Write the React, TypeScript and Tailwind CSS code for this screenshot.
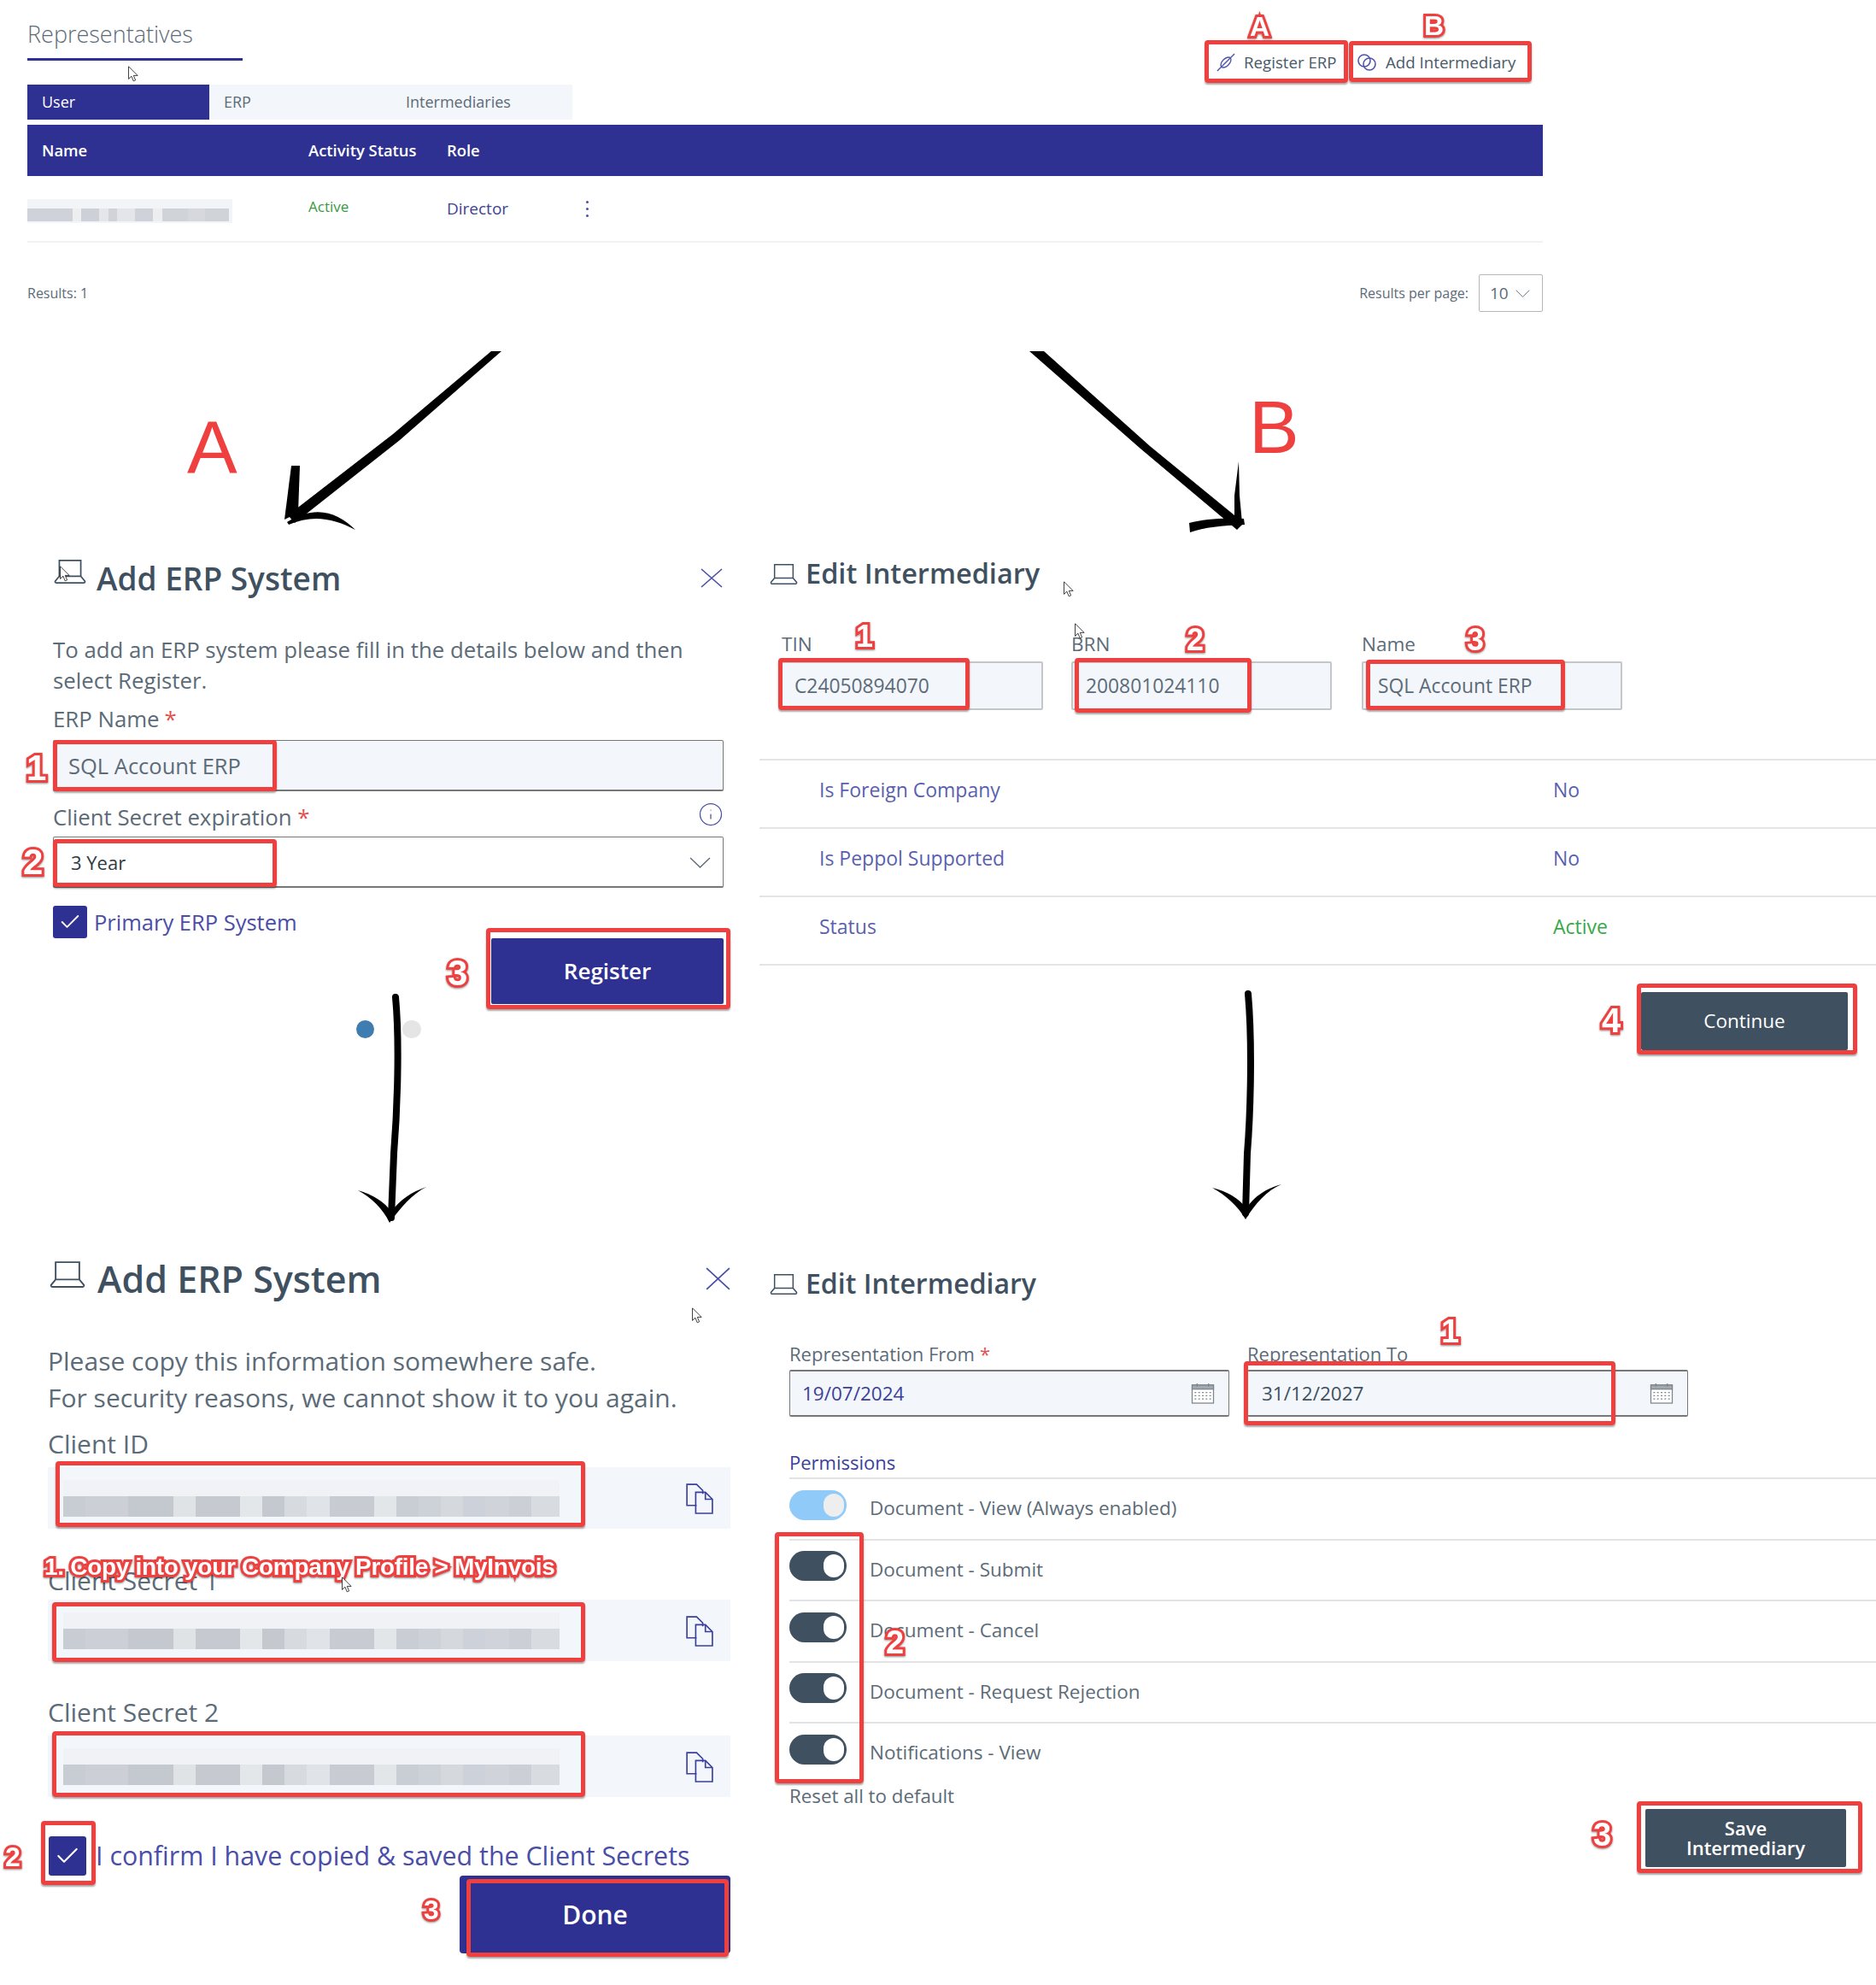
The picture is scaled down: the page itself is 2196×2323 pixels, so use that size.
import React from "react";
import { Check, Info } from "lucide-react";

const navy = "bg-[#2e3192]";

const blurCells = [
  "w-[26px] bg-[#c8ccd3]",
  "w-[50px] bg-[#ccd0d6]",
  "w-[53px] bg-[#c4c9d0]",
  "w-[26px] bg-[#dfe3e6]",
  "w-[52px] bg-[#c6cad0]",
  "w-[26px] bg-[#e3e7ea]",
  "w-[26px] bg-[#c3c9cf]",
  "w-[26px] bg-[#d7dbe0]",
  "w-[27px] bg-[#e0e4e8]",
  "w-[52px] bg-[#c8ccd2]",
  "w-[26px] bg-[#e2e6e9]",
  "w-[26px] bg-[#c9ced5]",
  "w-[26px] bg-[#cdd1d8]",
  "w-[26px] bg-[#d5d9de]",
  "w-[26px] bg-[#cdd1d9]",
  "w-[28px] bg-[#d0d4da]",
  "w-[26px] bg-[#ccd0d6]",
  "w-[33px] bg-[#d8dce0]",
];

const nameCells = [
  "w-[53px] bg-[#cfd2d8]",
  "w-[10px] bg-[#eceef0]",
  "w-[21px] bg-[#cdd0d6]",
  "w-[11px] bg-[#e4e6e9]",
  "w-[10px] bg-[#d0d3d8]",
  "w-[21px] bg-[#e3e5e8]",
  "w-[21px] bg-[#cfd2d8]",
  "w-[11px] bg-[#eceef0]",
  "w-[30px] bg-[#d0d3d8]",
  "w-[20px] bg-[#d6d8dd]",
  "w-[28px] bg-[#d0d3d8]",
];

const permissions = [
  "Document - Submit",
  "Document - Cancel",
  "Document - Request Rejection",
  "Notifications - View",
];

function LaptopIcon({ className }: { className: string }) {
  return (
    <svg viewBox="0 0 40 30" fill="none" stroke="#3f5060" strokeWidth="1.8" className={className}>
      <path d="M7 21V2h26v19" />
      <path d="M7 21h26l5 6a1.5 1.5 0 0 1-1 2H3a1.5 1.5 0 0 1-1-2z" />
    </svg>
  );
}

function CloseIcon({ className }: { className: string }) {
  return (
    <svg viewBox="0 0 26 24" fill="none" stroke="#4a4fa8" strokeWidth="1.6" preserveAspectRatio="none" className={className}>
      <path d="M1 1l24 22M25 1L1 23" />
    </svg>
  );
}

function ChevronIcon({ className }: { className: string }) {
  return (
    <svg viewBox="0 0 24 13" fill="none" stroke="#5c6b78" strokeWidth="1.3" preserveAspectRatio="none" className={className}>
      <path d="M1 1l11 11L23 1" />
    </svg>
  );
}

function CopyIcon({ className }: { className: string }) {
  return (
    <svg viewBox="0 0 32 36" fill="none" stroke="#3a3f9e" strokeWidth="1.6" className={className}>
      <path d="M13 26H2V2h11l7 7v4" />
      <path d="M12 11h11l8 8v16H12z" />
      <path d="M23 11v8h8" />
    </svg>
  );
}

function CalendarIcon() {
  return (
    <svg viewBox="0 0 28 26" className="w-[28px] h-[25px]" fill="none" stroke="#7c848c" strokeWidth="1.3">
      <rect x="1" y="3" width="26" height="22" fill="#fff" />
      <rect x="1" y="3" width="26" height="5" fill="#a2a8ae" />
      <path d="M7 1v4M21 1v4" />
      <path d="M4 12h20M4 16h20M4 20h20" strokeDasharray="2 2.5" />
    </svg>
  );
}

function Cursor({ className }: { className: string }) {
  return (
    <svg viewBox="0 0 12 19" className={`absolute w-[12px] h-[19px] ${className}`} fill="#fff" stroke="#111" strokeWidth="0.8">
      <path d="M.5.8v14.6l3.4-3.2 2.3 5.6 2.4-1-2.3-5.4h4.8z" />
    </svg>
  );
}

function RedBox({ className }: { className: string }) {
  return (
    <div
      className={`absolute border-[5px] border-[#ef4040] rounded-[4px] shadow-[0_2px_2px_rgba(0,0,0,0.35)] ${className}`}
    />
  );
}

function Mark({ className, children }: { className: string; children: React.ReactNode }) {
  return (
    <div
      className={`absolute font-['Liberation_Sans',sans-serif] font-bold leading-none text-white [-webkit-text-stroke:6px_#ef4040] [paint-order:stroke_fill] drop-shadow-[0_1px_1px_rgba(0,0,0,0.45)] ${className}`}
    >
      {children}
    </div>
  );
}

function PixelField() {
  return (
    <div className="flex items-center h-[72px] w-[799px] bg-[#f3f6fa] pl-[18px] pr-[20px] justify-between">
      <div className="w-[581px]">
        <div className="h-[19px] w-[581px] bg-[#f0f2f5]" />
        <div className="flex h-[24px]">
          {blurCells.map((cell, index) => (
            <div key={index} className={cell} />
          ))}
        </div>
      </div>
      <CopyIcon className="w-[33px] h-[37px]" />
    </div>
  );
}

function Toggle({ disabled }: { disabled?: boolean }) {
  return (
    <div
      className={`flex items-center justify-end w-[67px] h-[35px] rounded-full pr-[3px] -mt-[9px] ${
        disabled ? "bg-[#90caf9]" : "bg-[#3f5060]"
      }`}
    >
      <div className={`w-[24px] h-[27px] rounded-full ${disabled ? "bg-[#eeeeee]" : "bg-white"}`} />
    </div>
  );
}

function PermissionRow({ label, disabled }: { label: string; disabled?: boolean }) {
  return (
    <div className="flex items-center h-[71.5px] border-t-2 border-[#e2e3e4] gap-[27px]">
      <Toggle disabled={disabled} />
      <span className="text-[22.5px] text-[#5c6b78] -mt-[1px]">{label}</span>
    </div>
  );
}

function DetailRow({ label, value, green }: { label: string; value: string; green?: boolean }) {
  return (
    <div className="grid grid-cols-[859px_1fr] items-center h-[80px] border-t-2 border-[#e4e5e6] pl-[70px] pb-[9px] text-[23px] text-[#5a5fb0]">
      <span>{label}</span>
      <span className={green ? "text-[#3aa84a]" : ""}>{value}</span>
    </div>
  );
}

function ReadonlyField({
  label,
  value,
  width,
  inset,
  labelInset,
}: {
  label: string;
  value: string;
  width: string;
  inset: string;
  labelInset: string;
}) {
  return (
    <div className={width}>
      <div className={`h-[30px] mb-[5px] -mt-[2px] flex items-center text-[22.5px] text-[#5c6b78] ${labelInset}`}>{label}</div>
      <div className={`h-[57px] flex items-center pt-[2px] bg-[#f3f6fa] border-2 border-[#c4c6c9] rounded-[2px] text-[22.8px] text-[#5c6b78] ${inset}`}>
        {value}
      </div>
    </div>
  );
}

function TopSection() {
  return (
    <section className="w-[1806px] h-[412px] pl-[32px]">
      <div className="flex justify-between h-[99px]">
        <div className="w-[252px] h-[71px] pt-[20px] border-b-[3px] border-[#2e3192] text-[27px] font-light text-[#5c6b78]">
          Representatives
        </div>
        <div className="flex gap-[4px] mt-[49px] h-[48px] mr-[14px] text-[18.7px] text-[#4a5a68]">
          <div className="flex items-center gap-[10px] w-[166px] pl-[12px]">
            <svg viewBox="0 0 24 24" className="w-[22px] h-[22px]" fill="none" stroke="#4f55a8" strokeWidth="1.5">
              <path d="M1 23 23 1" />
              <ellipse cx="12" cy="12" rx="4.5" ry="8" transform="rotate(45 12 12)" />
            </svg>
            <span>Register ERP</span>
          </div>
          <div className="flex items-center gap-[10px] w-[210px] pl-[6px]">
            <svg viewBox="0 0 24 24" className="w-[24px] h-[24px]" fill="none" stroke="#4f55a8" strokeWidth="1.6">
              <circle cx="9" cy="10" r="7" />
              <circle cx="15" cy="14" r="7" />
            </svg>
            <span>Add Intermediary</span>
          </div>
        </div>
      </div>

      <div className="flex w-[638px] h-[41px] bg-[#f3f6fa] text-[18px] text-[#5c6b78]">
        <div className={`w-[213px] pl-[17px] flex items-center text-white ${navy}`}>User</div>
        <div className="w-[213px] pl-[17px] flex items-center">ERP</div>
        <div className="w-[212px] pl-[17px] flex items-center">Intermediaries</div>
      </div>

      <div className={`grid grid-cols-[312px_162px_1fr] items-center mt-[6px] h-[60px] pl-[17px] text-[18.4px] font-semibold text-white ${navy}`}>
        <span>Name</span>
        <span>Activity Status</span>
        <span>Role</span>
      </div>

      <div className="flex items-center h-[78px] border-b-2 border-[#f2f2f2]">
        <div className="w-[329px] shrink-0">
          <div className="w-[240px] h-[28px] bg-[#f3f4f7] pt-[11px] mt-[5px]">
            <div className="flex h-[15px]">
              {nameCells.map((cell, index) => (
                <div key={index} className={cell} />
              ))}
            </div>
          </div>
        </div>
        <span className="w-[162px] text-[17px] text-[#3a9a3f] -mt-[4px]">Active</span>
        <span className="w-[163px] text-[19px] text-[#3f4399]">Director</span>
        <div className="flex flex-col gap-[5px]">
          <div className="w-[3px] h-[3px] rounded-full bg-[#4a4ea8]" />
          <div className="w-[3px] h-[3px] rounded-full bg-[#4a4ea8]" />
          <div className="w-[3px] h-[3px] rounded-full bg-[#4a4ea8]" />
        </div>
      </div>

      <div className="flex justify-between items-center mt-[37px] h-[44px] text-[16px] text-[#5c6b78]">
        <span>Results: 1</span>
        <div className="flex items-center gap-[12px]">
          <span>Results per page:</span>
          <div className="flex items-center gap-[8px] w-[75px] h-[44px] pl-[12px] border border-[#b4b6b9] rounded-[2px] text-[19px]">
            10
            <ChevronIcon className="w-[17px] h-[9px]" />
          </div>
        </div>
      </div>
    </section>
  );
}

function AddErpForm() {
  return (
    <div className="w-[889px] h-[1048px] pl-[62px] pr-[42px]">
      <div className="flex items-center justify-between mt-[241px] h-[48px]">
        <div className="flex items-center gap-[11px]">
          <LaptopIcon className="w-[40px] h-[29px] -mt-[18px]" />
          <span className="text-[37px] font-semibold text-[#3f5060]">Add ERP System</span>
        </div>
        <CloseIcon className="w-[26px] h-[23px] -mt-[2px] mr-[1px]" />
      </div>

      <p className="mt-[41px] text-[25.8px] leading-[36px] text-[#5c6b78]">
        To add an ERP system please fill in the details below and then select Register.
      </p>

      <div className="mt-[9px] h-[36px] flex items-center text-[25.8px] text-[#5c6b78]">
        ERP Name <span className="text-[#e05050] ml-[6px]">*</span>
      </div>
      <div className="mt-[7px] h-[60px] flex items-center pl-[17px] pt-[2px] bg-[#f3f6fa] border border-[#777] border-b-2 rounded-[2px] text-[25.5px] text-[#5c6b78]">
        SQL Account ERP
      </div>

      <div className="mt-[12px] h-[36px] flex items-center justify-between text-[25.8px] text-[#5c6b78]">
        <span>
          Client Secret expiration <span className="text-[#e05050]">*</span>
        </span>
        <Info className="w-[30px] h-[30px] text-[#4a4fa8] -mt-[6px]" strokeWidth={1} />
      </div>
      <div className="mt-[5px] h-[60px] flex items-center justify-between pl-[20px] pt-[2px] pr-[14px] border border-[#777] border-b-2 rounded-[2px] text-[22px] text-[#2f3a44]">
        3 Year
        <ChevronIcon className="w-[25px] h-[13px]" />
      </div>

      <div className="flex items-center gap-[8px] mt-[21px] h-[38px]">
        <div className={`flex items-center justify-center w-[40px] h-[38px] rounded-[3px] ${navy}`}>
          <Check className="w-[28px] h-[28px] text-white" strokeWidth={1.6} />
        </div>
        <span className="text-[25.5px] text-[#4a4ea8]">Primary ERP System</span>
      </div>

      <div className="flex justify-end">
        <div className={`flex items-center justify-center w-[272px] h-[77px] rounded-[2px] text-[26px] font-semibold text-white ${navy}`}>
          Register
        </div>
      </div>

      <div className="flex gap-[33px] mt-[19px] ml-[355px]">
        <div className="w-[21px] h-[21px] rounded-full bg-[#3f7cb0]" />
        <div className="w-[22px] h-[21px] rounded-full bg-[#e5e5e5]" />
      </div>
    </div>
  );
}

function EditIntermediaryDetails() {
  return (
    <div className="flex-1 h-[1048px]">
      <div className="flex items-center gap-[8px] mt-[239px] h-[40px] pl-[11px]">
        <LaptopIcon className="w-[35px] h-[25px]" />
        <span className="text-[32.5px] font-semibold text-[#3f5060]">Edit Intermediary</span>
      </div>

      <div className="flex mt-[50px] pl-[23px]">
        <ReadonlyField label="TIN" value="C24050894070" width="w-[309px] mr-[33px]" inset="pl-[16px]" labelInset="pl-[3px]" />
        <ReadonlyField label="BRN" value="200801024110" width="w-[305px] mr-[35px]" inset="pl-[15px]" labelInset="pl-[0px]" />
        <ReadonlyField label="Name" value="SQL Account ERP" width="w-[305px]" inset="pl-[17px]" labelInset="pl-[0px]" />
      </div>

      <div className="mt-[57px]">
        <DetailRow label="Is Foreign Company" value="No" />
        <DetailRow label="Is Peppol Supported" value="No" />
        <DetailRow label="Status" value="Active" green />
        <div className="border-t-2 border-[#e4e5e6]" />
      </div>

      <div className="flex justify-end mt-[31px] pr-[33px]">
        <div className="flex items-center justify-center w-[242px] h-[68px] rounded-[2px] bg-[#3f5060] text-[22.5px] font-medium text-white">
          Continue
        </div>
      </div>
    </div>
  );
}

function ClientSecrets() {
  return (
    <div className="w-[889px] h-[863px] pl-[56px] pr-[34px]">
      <div className="flex items-center justify-between mt-[13px] h-[48px]">
        <div className="flex items-center gap-[12px]">
          <LaptopIcon className="w-[46px] h-[32px] -mt-[12px]" />
          <span className="text-[43px] font-semibold text-[#3f5060]">Add ERP System</span>
        </div>
        <CloseIcon className="w-[29px] h-[27px] -mt-[2px]" />
      </div>

      <p className="mt-[50px] text-[30px] leading-[43px] text-[#5c6b78]">
        Please copy this information somewhere safe.
        <br />
        For security reasons, we cannot show it to you again.
      </p>

      <div className="mt-[10px] h-[44px] flex items-center text-[30px] text-[#5c6b78]">Client ID</div>
      <div className="mt-[6px]">
        <PixelField />
      </div>

      <div className="mt-[38px] h-[44px] flex items-center text-[30px] text-[#5c6b78]">Client Secret 1</div>
      <div className="mt-[1px]">
        <PixelField />
      </div>

      <div className="mt-[37px] h-[44px] flex items-center text-[30px] text-[#5c6b78]">Client Secret 2</div>
      <div className="mt-[6px]">
        <PixelField />
      </div>

      <div className="flex items-center gap-[11px] mt-[46px] h-[46px]">
        <div className={`flex items-center justify-center w-[44px] h-[46px] ml-[1px] rounded-[3px] ${navy}`}>
          <Check className="w-[32px] h-[32px] text-white" strokeWidth={1.6} />
        </div>
        <span className="text-[30.4px] text-[#4a4ea8]">I confirm I have copied &amp; saved the Client Secrets</span>
      </div>

      <div className="flex justify-end">
        <div className={`flex items-center justify-center w-[317px] h-[91px] rounded-[4px] text-[30px] font-semibold text-white ${navy}`}>
          Done
        </div>
      </div>
    </div>
  );
}

function EditIntermediaryPermissions() {
  return (
    <div className="flex-1 h-[863px]">
      <div className="flex items-center gap-[8px] mt-[22px] h-[40px] pl-[11px]">
        <LaptopIcon className="w-[35px] h-[25px]" />
        <span className="text-[32px] font-semibold text-[#3f5060]">Edit Intermediary</span>
      </div>

      <div className="pl-[35px]">
        <div className="flex gap-[21px] mt-[47px]">
          <div className="w-[515px]">
            <div className="h-[30px] flex items-center text-[22px] text-[#5c6b78]">
              Representation From <span className="text-[#e05050] ml-[6px]">*</span>
            </div>
            <div className="flex items-center justify-between h-[55px] mt-[4px] pl-[14px] pr-[16px] bg-[#f3f6fa] border border-[#777] border-y-2 rounded-[2px] text-[22.5px] text-[#3c3f9a]">
              19/07/2024
              <CalendarIcon />
            </div>
          </div>
          <div className="w-[516px]">
            <div className="h-[30px] flex items-center text-[22px] text-[#5c6b78]">Representation To</div>
            <div className="flex items-center justify-between h-[55px] mt-[4px] pl-[16px] pr-[16px] bg-[#f3f6fa] border border-[#777] border-y-2 rounded-[2px] text-[22.5px] text-[#3f5060]">
              31/12/2027
              <CalendarIcon />
            </div>
          </div>
        </div>

        <div className="mt-[38px] h-[30px] flex items-center text-[22px] text-[#3c3f9a]">Permissions</div>
        <div className="mt-[3px]">
          <PermissionRow label="Document - View (Always enabled)" disabled />
          {permissions.map((label) => (
            <PermissionRow key={label} label={label} />
          ))}
        </div>
        <div className="h-[30px] flex items-center text-[22.3px] text-[#5c6b78]">Reset all to default</div>
      </div>

      <div className="flex justify-end pr-[35px]">
        <div className="flex items-center justify-center w-[235px] h-[68px] rounded-[2px] bg-[#3f5060] text-center text-[22px] leading-[23px] font-semibold text-white">
          Save
          <br />
          Intermediary
        </div>
      </div>
    </div>
  );
}

function Arrows() {
  return (
    <svg viewBox="0 0 2196 2323" className="absolute left-0 top-0 w-[2196px] h-[2323px] pointer-events-none" fill="#000">
      <polygon points="575,411 587,411 468,515 345,612 337,603 460,508" />
      <polygon points="333,608 341,545 351,545 349,600" />
      <path d="M336,611 C370,590 395,600 416,620 C390,606 365,602 338,614 Z" />

      <polygon points="1205,411 1222,411 1346,522 1456,612 1448,620 1335,525" />
      <polygon points="1450,540 1445,580 1445,612 1454,612 1451,580" />
      <path d="M1392,612 C1410,607 1430,606 1456,607 L1457,614 C1430,615 1410,617 1393,623 Z" />

      <path d="M463,1167 C468,1220 465,1300 461,1350 L458,1425" fill="none" stroke="#000" strokeWidth="8" strokeLinecap="round" />
      <path d="M419,1393 C435,1402 448,1414 456,1431 C470,1412 482,1398 499,1389 C482,1395 468,1404 458,1418 C450,1406 436,1398 419,1393 Z" />

      <path d="M1461,1163 C1466,1220 1464,1300 1460,1350 L1458,1420" fill="none" stroke="#000" strokeWidth="8" strokeLinecap="round" />
      <path d="M1419,1390 C1435,1399 1449,1411 1458,1427 C1470,1408 1482,1394 1500,1386 C1482,1391 1468,1400 1459,1414 C1450,1402 1436,1394 1419,1390 Z" />
    </svg>
  );
}

function Annotations() {
  return (
    <>
      <RedBox className="left-[1410px] top-[47px] w-[168px] h-[50px]" />
      <RedBox className="left-[1579px] top-[48px] w-[214px] h-[48px]" />
      <Mark className="left-[1463px] top-[15px] text-[32px]">A</Mark>
      <Mark className="left-[1667px] top-[14px] text-[32px]">B</Mark>

      <div className="absolute left-[219px] top-[480px] text-[88px] leading-none text-[#ef4040] font-['Liberation_Sans',sans-serif]">A</div>
      <div className="absolute left-[1462px] top-[456px] text-[88px] leading-none text-[#ef4040] font-['Liberation_Sans',sans-serif]">B</div>

      <RedBox className="left-[62px] top-[866px] w-[262px] h-[60px]" />
      <RedBox className="left-[62px] top-[982px] w-[262px] h-[56px]" />
      <RedBox className="left-[569px] top-[1086px] w-[286px] h-[95px]" />
      <Mark className="left-[31px] top-[878px] text-[42px]">1</Mark>
      <Mark className="left-[27px] top-[988px] text-[42px]">2</Mark>
      <Mark className="left-[524px] top-[1118px] text-[42px]">3</Mark>

      <RedBox className="left-[911px] top-[770px] w-[224px] h-[61px]" />
      <RedBox className="left-[1258px] top-[770px] w-[207px] h-[64px]" />
      <RedBox className="left-[1599px] top-[772px] w-[233px] h-[59px]" />
      <Mark className="left-[1002px] top-[727px] text-[36px]">1</Mark>
      <Mark className="left-[1389px] top-[731px] text-[36px]">2</Mark>
      <Mark className="left-[1717px] top-[731px] text-[36px]">3</Mark>
      <RedBox className="left-[1916px] top-[1151px] w-[258px] h-[83px]" />
      <Mark className="left-[1875px] top-[1174px] text-[40px]">4</Mark>

      <RedBox className="left-[65px] top-[1710px] w-[620px] h-[77px]" />
      <RedBox className="left-[61px] top-[1875px] w-[624px] h-[70px]" />
      <RedBox className="left-[61px] top-[2026px] w-[624px] h-[77px]" />
      <RedBox className="left-[48px] top-[2131px] w-[64px] h-[75px]" />
      <RedBox className="left-[546px] top-[2199px] w-[307px] h-[91px]" />
      <Mark className="left-[6px] top-[2157px] text-[32px]">2</Mark>
      <Mark className="left-[496px] top-[2219px] text-[32px]">3</Mark>
      <Mark className="left-[52px] top-[1820px] text-[28px] tracking-[-0.3px]">1. Copy into your Company Profile &gt; MyInvois</Mark>

      <RedBox className="left-[1456px] top-[1593px] w-[435px] h-[75px]" />
      <RedBox className="left-[907px] top-[1793px] w-[104px] h-[294px]" />
      <Mark className="left-[1037px] top-[1903px] text-[38px]">2</Mark>
      <Mark className="left-[1687px] top-[1539px] text-[38px]">1</Mark>
      <RedBox className="left-[1916px] top-[2108px] w-[264px] h-[84px]" />
      <Mark className="left-[1865px] top-[2128px] text-[38px]">3</Mark>

      <Cursor className="left-[150px] top-[77px]" />
      <Cursor className="left-[70px] top-[662px]" />
      <Cursor className="left-[1245px] top-[680px]" />
      <Cursor className="left-[1258px] top-[729px]" />
      <Cursor className="left-[810px] top-[1530px]" />
      <Cursor className="left-[400px] top-[1845px]" />
    </>
  );
}

export default function App() {
  return (
    <div className="relative w-[2196px] h-[2323px] overflow-hidden bg-white font-['Open_Sans',sans-serif]">
      <TopSection />
      <div className="flex">
        <AddErpForm />
        <EditIntermediaryDetails />
      </div>
      <div className="flex">
        <ClientSecrets />
        <EditIntermediaryPermissions />
      </div>
      <Arrows />
      <Annotations />
    </div>
  );
}
